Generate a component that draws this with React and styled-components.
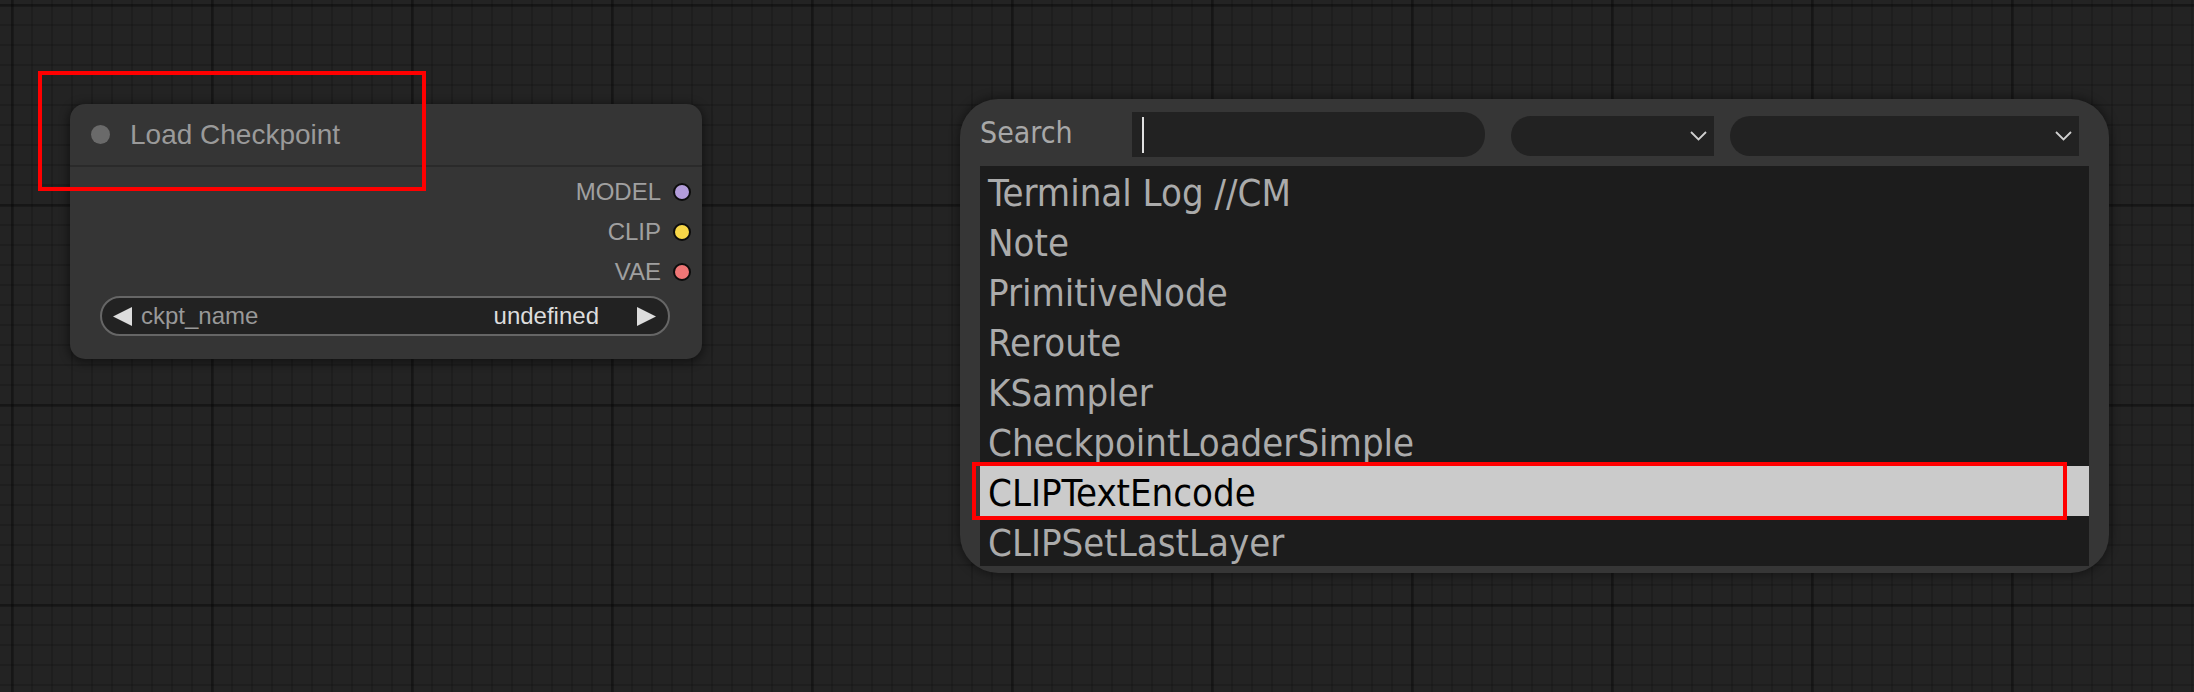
import React from "react";
import styled, { createGlobalStyle } from "styled-components";

const Global = createGlobalStyle`
  html, body { margin: 0; padding: 0; background: #232323; overflow: hidden; }
  #root { width: 2194px; height: 692px; }
`;

const Canvas = styled.div`
  position: relative;
  width: 2194px;
  height: 692px;
  overflow: hidden;
  background-color: #232323;
  background-image:
    linear-gradient(to right, rgba(0, 0, 0, 0.26) 0 3px, transparent 3px),
    linear-gradient(to bottom, rgba(0, 0, 0, 0.26) 0 3px, transparent 3px),
    linear-gradient(to right, rgba(0, 0, 0, 0.13) 0 2px, transparent 2px),
    linear-gradient(to bottom, rgba(0, 0, 0, 0.13) 0 2px, transparent 2px);
  background-size: 200px 200px, 200px 200px, 20px 20px, 20px 20px;
  background-position: 11px 4px, 11px 4px, 11px 4px, 11px 4px;
`;

/* ---------- Node ---------- */
const Node = styled.div`
  position: absolute;
  left: 70px;
  top: 104px;
  width: 632px;
  height: 255px;
  box-sizing: border-box;
  background: #353535;
  border-radius: 15px;
  box-shadow: 0 2px 10px 2px rgba(0, 0, 0, 0.45);
  display: flex;
  flex-direction: column;
  font-family: "Liberation Sans", Arial, sans-serif;
`;

const NodeTitle = styled.div`
  height: 61px;
  flex: none;
  display: flex;
  align-items: center;
  gap: 20px;
  padding-left: 21px;
  border-bottom: 2px solid #2a2a2a;
`;

const TitleDot = styled.span`
  width: 19px;
  height: 19px;
  border-radius: 50%;
  background: #6a6a6a;
`;

const TitleText = styled.span`
  font-size: 28px;
  color: #9a9a9a;
  line-height: 1;
`;

const NodeBody = styled.div`
  flex: 1;
  display: flex;
  flex-direction: column;
  padding: 5px 11px 0 30px;
`;

const OutputRow = styled.div`
  height: 40px;
  display: flex;
  align-items: center;
  justify-content: flex-end;
  gap: 12px;
`;

const OutputLabel = styled.span`
  font-size: 24px;
  color: #a0a0a0;
  line-height: 1;
`;

const Slot = styled.span`
  width: 18px;
  height: 18px;
  box-sizing: border-box;
  border-radius: 50%;
  border: 2px solid #0c0c0c;
  background: ${(p) => p.$color};
`;

const Widget = styled.div`
  margin-top: 4px;
  margin-right: 21px;
  height: 40px;
  box-sizing: border-box;
  border: 2px solid #666;
  border-radius: 20px;
  background: #222;
  display: flex;
  align-items: center;
  padding: 0 12px 0 11px;
  font-size: 24px;
`;

const WidgetName = styled.span`
  color: #999;
  margin-left: 8px;
  flex: 1;
`;

const WidgetValue = styled.span`
  color: #ddd;
  margin-right: 37px;
`;

const Arrow = ({ dir }) => (
  <svg width="20" height="19" viewBox="0 0 20 19">
    {dir === "left" ? (
      <polygon points="0,9.5 19,0 19,19" fill="#ddd" />
    ) : (
      <polygon points="20,9.5 1,0 1,19" fill="#ddd" />
    )}
  </svg>
);

/* ---------- Search box ---------- */
const SearchBox = styled.div`
  position: absolute;
  left: 960px;
  top: 99px;
  width: 1149px;
  height: 474px;
  box-sizing: border-box;
  padding: 13px 20px 7px 20px;
  background: #363636;
  border-radius: 38px;
  box-shadow: 0 0 10px 2px rgba(0, 0, 0, 0.4);
  display: flex;
  flex-direction: column;
  font-family: "DejaVu Sans Condensed", "DejaVu Sans", Verdana, sans-serif;
  font-stretch: condensed;
`;

const Header = styled.div`
  height: 45px;
  flex: none;
  display: flex;
  align-items: flex-start;
`;

const SearchLabel = styled.span`
  width: 152px;
  height: 45px;
  line-height: 42px;
  font-size: 30px;
  color: #a8a8a8;
`;

const SearchInput = styled.div`
  width: 353px;
  height: 45px;
  background: #222;
  border-radius: 0 22px 22px 0;
  display: flex;
  align-items: center;
  padding-left: 10px;
  box-sizing: border-box;
`;

const Caret = styled.span`
  width: 2px;
  height: 36px;
  background: #e0e0e0;
`;

const Select = styled.div`
  margin-top: 4px;
  margin-left: ${(p) => p.$gap}px;
  width: ${(p) => p.$w}px;
  height: 40px;
  box-sizing: border-box;
  background: #222;
  border-radius: 20px 0 0 20px;
  display: flex;
  align-items: center;
  justify-content: flex-end;
  padding-right: 7px;
`;

const Chevron = () => (
  <svg width="17" height="10" viewBox="0 0 17 10">
    <polyline points="1,1 8.5,8.5 16,1" fill="none" stroke="#d0d0d0" strokeWidth="1.8" />
  </svg>
);

const List = styled.div`
  margin-top: 9px;
  height: 400px;
  background: #1c1c1c;
  display: flex;
  flex-direction: column;
  overflow: hidden;
`;

const Item = styled.div`
  height: 50px;
  flex: none;
  box-sizing: border-box;
  padding: 4px 0 0 8px;
  line-height: 46px;
  font-size: 38px;
  white-space: nowrap;
  color: ${(p) => (p.$selected ? "#000" : "#ababab")};
  background: ${(p) => (p.$selected ? "#cbcbcb" : "transparent")};
`;

/* ---------- Annotation ---------- */
const Highlight = styled.div`
  position: absolute;
  box-sizing: border-box;
  border: 4px solid #ff0000;
  pointer-events: none;
`;

const outputs = [
  { name: "MODEL", color: "#b39ddb" },
  { name: "CLIP", color: "#f8d748" },
  { name: "VAE", color: "#ef7676" },
];

const items = [
  "Terminal Log //CM",
  "Note",
  "PrimitiveNode",
  "Reroute",
  "KSampler",
  "CheckpointLoaderSimple",
  "CLIPTextEncode",
  "CLIPSetLastLayer",
];

export default function App() {
  return (
    <>
      <Global />
      <Canvas>
        <Node>
          <NodeTitle>
            <TitleDot />
            <TitleText>Load Checkpoint</TitleText>
          </NodeTitle>
          <NodeBody>
            {outputs.map((o) => (
              <OutputRow key={o.name}>
                <OutputLabel>{o.name}</OutputLabel>
                <Slot $color={o.color} />
              </OutputRow>
            ))}
            <Widget>
              <Arrow dir="left" />
              <WidgetName>ckpt_name</WidgetName>
              <WidgetValue>undefined</WidgetValue>
              <Arrow dir="right" />
            </Widget>
          </NodeBody>
        </Node>

        <SearchBox>
          <Header>
            <SearchLabel>Search</SearchLabel>
            <SearchInput>
              <Caret />
            </SearchInput>
            <Select $gap={26} $w={203}>
              <Chevron />
            </Select>
            <Select $gap={16} $w={349}>
              <Chevron />
            </Select>
          </Header>
          <List>
            {items.map((it) => (
              <Item key={it} $selected={it === "CLIPTextEncode"}>
                {it}
              </Item>
            ))}
          </List>
        </SearchBox>

        <Highlight style={{ left: 38, top: 71, width: 388, height: 120 }} />
        <Highlight style={{ left: 972, top: 462, width: 1095, height: 58 }} />
      </Canvas>
    </>
  );
}
